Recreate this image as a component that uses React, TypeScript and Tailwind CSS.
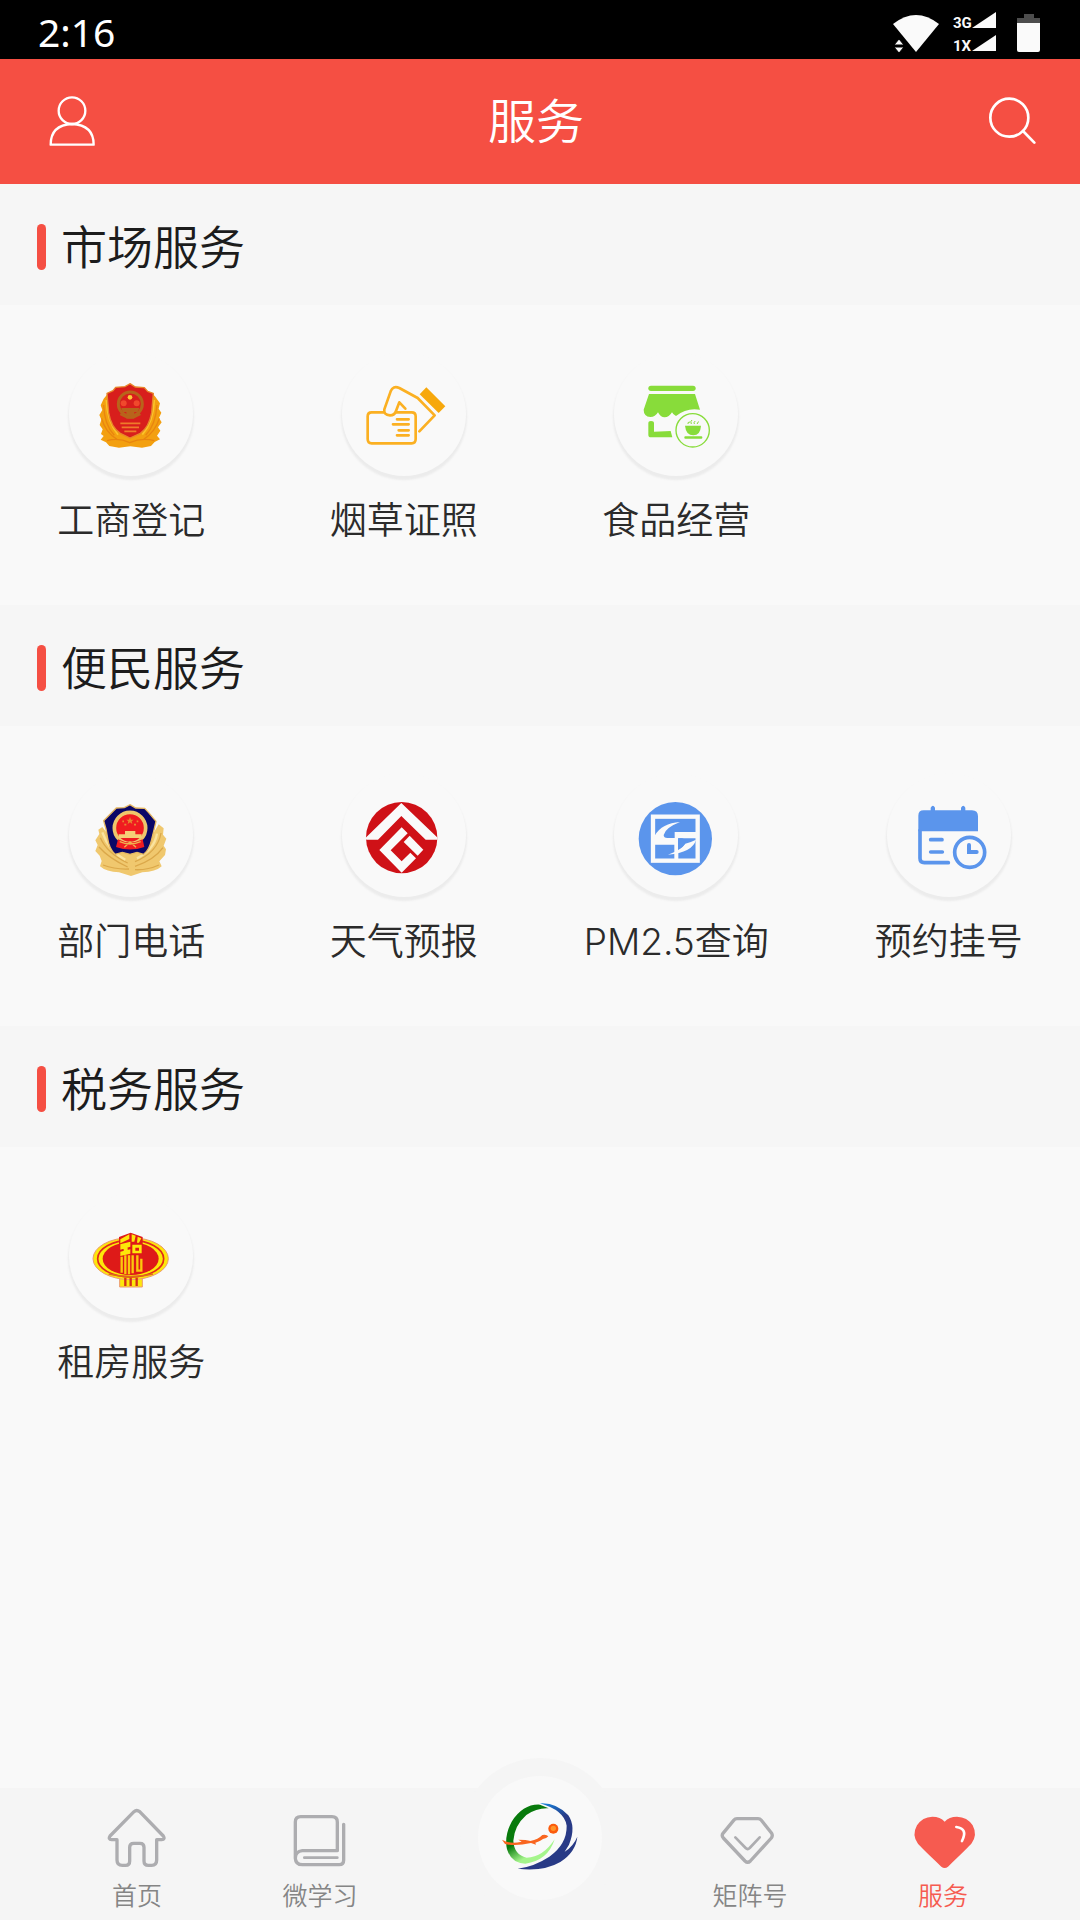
import type { ReactNode } from 'react';

interface Service {
  name: string;
  icon: ReactNode;
}

interface ServiceGroup {
  title: string;
  services: Service[];
}

function BusinessIcon() {
  return (
    <svg viewBox="86 6 372 372" className="size-[124px]" aria-hidden="true">
      <path
        d="M205 128 L190 146 L181 166 L186 180 L177 195 L183 209 L178 225 L187 238 L182 252 L190 258 L181 269 L197 277 L207 288 L236 293 L270 289 L305 293 L332 288 L343 276 L359 268 L350 257 L360 242 L353 232 L364 217 L356 204 L363 188 L355 176 L359 160 L345 140 L332 126 Z"
        fill="#f3a010"
      />
      <path d="M190 165 Q192 225 222 256 M184 205 Q194 245 230 268 M350 165 Q346 225 316 256 M357 205 Q345 245 310 268 M200 272 Q235 262 268 278 Q305 262 342 272" stroke="#e9850f" strokeWidth="4" fill="none" />
      <path d="M198 150 Q200 215 233 254 M342 150 Q340 215 306 254" stroke="#fbc52a" strokeWidth="5" fill="none" />
      <path
        d="M269 101 L285 111 L312 113 L322 124 L339 130 L334 188 Q326 232 300 250 L269 264 L240 250 Q212 232 205 188 L200 130 L218 122 L226 112 L254 110 Z"
        fill="#d81e1c"
        stroke="#e8862a"
        strokeWidth="4"
      />
      <circle cx="270" cy="162" r="36" fill="none" stroke="#b8641b" strokeWidth="9" />
      <circle cx="269" cy="142" r="7" fill="#ffc83c" />
      <circle cx="250" cy="160" r="9" fill="#f0492c" />
      <circle cx="289" cy="160" r="9" fill="#f0492c" />
      <path d="M243 174 H297 L292 186 H247 Z M258 184 H282 V206 H258 Z" fill="#b8641b" />
      <path d="M240 192 Q270 212 300 192" stroke="#b8641b" strokeWidth="7" fill="none" />
      <path d="M240 220 H300 M244 232 H296 M252 244 H288" stroke="#ef7b2a" strokeWidth="5" />
    </svg>
  );
}

function LicenceIcon() {
  return (
    <svg viewBox="94 6 372 372" className="size-[124px]" fill="none" stroke="#fbb022" strokeWidth="8" strokeLinecap="round" strokeLinejoin="round" aria-hidden="true">
      <path d="M220 187 H183 Q171 187 171 199 V267 Q171 280 183 280 H303 Q315 280 315 267 V199 Q315 187 303 187 H256" />
      <path d="M326 244 L372 196 L321 144 L266 114 Q247 106 240 124 L221 178 Q218 195 238 196 Q252 196 256 183 L266 157 L284 176" />
      <path d="M259 208 H294 M247 223 H294 M264 241 H294 M259 256 H294" />
      <path d="M347 112 L404 169 L384 189 L327 133 Z" fill="#f7a80c" stroke="none" />
    </svg>
  );
}

function FoodIcon() {
  return (
    <svg viewBox="102 6 372 372" className="size-[124px]" fill="#88dc3a" aria-hidden="true">
      <rect x="205" y="107" width="142" height="16" rx="8" />
      <path d="M207 132 H345 L360 179 Q320 172 288 198 Q279 194 276 187 Q267 202 254 202 Q241 202 234 187 Q226 201 211 201 Q191 199 191 179 Z" />
      <path d="M205 220 Q205 213 213 213 Q222 213 222 220 V245 L272 243 L277 262 H213 Q205 262 205 254 Z" />
      <circle cx="338" cy="241" r="50" fill="none" stroke="#88dc3a" strokeWidth="4" />
      <path d="M315 227 H363 Q361 256 340 256 Q318 256 315 227 Z" />
      <rect x="313" y="259" width="54" height="7" rx="3" />
      <path d="M324 222 Q322 216 330 216 M334 222 Q330 214 336 210 M343 222 Q340 216 346 213 M352 222 Q350 218 357 215" fill="none" stroke="#88dc3a" strokeWidth="3" />
    </svg>
  );
}

function PoliceIcon() {
  return (
    <svg viewBox="86 6 372 372" className="size-[124px]" aria-hidden="true">
      <path
        d="M186 168 L174 176 L177 189 L165 208 L172 222 L165 240 L178 254 L184 270 L179 286 Q198 303 236 304 L272 315 L306 304 Q346 303 364 286 L357 271 L374 252 L377 235 L370 224 L378 203 L368 191 L370 172 L355 160 L320 220 H225 Z"
        fill="#f0c86e"
      />
      <path d="M180 200 Q200 246 262 276 M176 228 Q206 262 262 288 M188 282 Q225 296 266 294 M362 186 Q352 244 284 272 M368 230 Q340 268 284 286 M356 282 Q320 298 284 296" stroke="#dba84a" strokeWidth="4" fill="none" />
      <path d="M186 184 Q205 240 255 266 M350 188 Q342 236 290 262" stroke="#fae3a0" strokeWidth="7" fill="none" />
      <path
        d="M269 101 L286 111 L313 112 L325 125 L347 151 Q341 178 334 205 Q327 237 310 250 L290 244 L269 250 L246 244 L224 250 Q206 232 202 202 Q198 172 190 149 L216 123 L228 111 L252 110 Z"
        fill="#0b0767"
        stroke="#e6b862"
        strokeWidth="4"
      />
      <circle cx="269" cy="171" r="47" fill="#f01b20" stroke="#efc66c" strokeWidth="11" />
      <path d="M269 138 l3 8 h8 l-6 5 l2 8 l-7 -5 l-7 5 l2 -8 l-6 -5 h8 Z" fill="#e88730" />
      <path d="M252 161 h6 M281 161 h6 M246 151 h5 M289 151 h5" stroke="#e88730" strokeWidth="5" />
      <path d="M254 180 H285 V190 H304 V201 H235 V190 H254 Z" fill="#f5cf77" />
      <path d="M233 205 Q269 224 307 205 L312 228 Q269 243 227 228 Z" fill="#f01b20" />
      <path d="M238 212 Q269 226 301 212 M252 229 L269 213 L287 229" stroke="#efb34f" strokeWidth="4" fill="none" />
    </svg>
  );
}

function WeatherIcon() {
  return (
    <svg viewBox="94 6 372 372" className="size-[124px]" aria-hidden="true">
      <circle cx="273" cy="200" r="107" fill="#cf1117" />
      <g fill="#fafafa">
        <path d="M272 96 L381 200 L379 206 H345 L272 135 L202 206 H167 L165 200 Z" />
        <path d="M273 169 L291 187 L240 238 L273 271 L299 245 L316 262 L273 305 L206 237 Z" />
        <path d="M297 194 L338 236 L321 254 L279 213 Z" />
      </g>
    </svg>
  );
}

function AirIcon() {
  return (
    <svg viewBox="132 6 372 372" className="size-[124px]" aria-hidden="true">
      <circle cx="316" cy="203" r="110" fill="#5b95ec" />
      <rect x="249" y="137" width="134" height="132" fill="#5b95ec" stroke="#fafafa" strokeWidth="13" />
      {/* two strokes mirrored around the centre of the square */}
      <g fill="#fafafa">
        <path d="M254 194 Q276 156 330 153 Q286 170 281 192 Q281 201 292 201 H314 V183 H380 V202 H325 V268 H313 V221 H254 Z" />
        <path d="M378 206 Q368 244 294 251 Q334 236 346 218 Q362 214 378 206 Z" />
      </g>
      <path d="M324 202 H336 Q346 204 346 213 Q344 226 324 236 Z" fill="#5b95ec" />
    </svg>
  );
}

function AppointmentIcon() {
  return (
    <svg viewBox="948 6 372 372" className="size-[124px]" fill="none" stroke="#5b95ec" strokeWidth="11" strokeLinecap="round" aria-hidden="true">
      <path d="M1042 181 V134 Q1042 118 1058 118 H1079 V110 Q1086 98 1092 110 V118 H1170 V110 Q1177 98 1183 110 V118 H1203 Q1221 118 1221 136 V181 Z" fill="#5b95ec" stroke="none" />
      <path d="M1047 178 V262 Q1047 275 1060 275 H1132" />
      <path d="M1079 206 H1113 M1079 243 H1114" />
      <circle cx="1196" cy="244" r="45" />
      <path d="M1194 222 V243 H1217" strokeWidth="12" />
    </svg>
  );
}

function TaxIcon() {
  return (
    <svg viewBox="86 6 372 372" className="size-[124px]" aria-hidden="true">
      <path d="M238 248 H306 V285 H238 Z" fill="#fde70a" stroke="#eb9a72" strokeWidth="3" />
      <ellipse cx="271" cy="200" rx="113" ry="63" fill="#fde70a" stroke="#eb9a72" strokeWidth="3" />
      <ellipse cx="271" cy="200" rx="99" ry="55" fill="none" stroke="#e02a1c" strokeWidth="5" />
      <ellipse cx="271" cy="200" rx="84" ry="49" fill="#de1a18" />
      <path d="M236 135 L271 122 L307 135 V242 Q271 252 236 242 Z" fill="#de1a18" />
      <path d="M240 142 L267 127 V141 L240 154 Z M274 127 L286 131 L282 149 H274 Z M292 134 L303 139 L296 152 H290 Z M240 157 L270 149 V164 L240 173 Z M250 166 H262 V184 H250 Z M240 179 L270 172 V185 L240 192 Z" fill="#fde70a" />
      <path d="M276 158 H304 V184 H276 Z M285 167 V176 H296 V167 Z" fill="#fde70a" fillRule="evenodd" />
      <path d="M244 194 V242 M255 190 V246 M266 190 V247 M277 190 V244 M291 190 V236 H303 V200" stroke="#fbc80c" strokeWidth="7" fill="none" />
      <path d="M205 246 Q271 261 338 246" stroke="#e0661c" strokeWidth="4" fill="none" />
      <path d="M255 257 V282 M271 257 V282 M289 257 V282" stroke="#d3311a" strokeWidth="7" />
    </svg>
  );
}

const groups: ServiceGroup[] = [
  {
    title: '市场服务',
    services: [
      { name: '工商登记', icon: <BusinessIcon /> },
      { name: '烟草证照', icon: <LicenceIcon /> },
      { name: '食品经营', icon: <FoodIcon /> },
    ],
  },
  {
    title: '便民服务',
    services: [
      { name: '部门电话', icon: <PoliceIcon /> },
      { name: '天气预报', icon: <WeatherIcon /> },
      { name: 'PM2.5查询', icon: <AirIcon /> },
      { name: '预约挂号', icon: <AppointmentIcon /> },
    ],
  },
  {
    title: '税务服务',
    services: [{ name: '租房服务', icon: <TaxIcon /> }],
  },
];

function StatusBar() {
  return (
    <div className="flex h-[59px] items-center justify-between bg-black px-10 pl-[38px] text-white">
      <span className="pt-1 font-['Noto_Sans'] text-[39px] leading-none font-normal">2:16</span>
      <svg viewBox="0 0 147 44" className="mt-1 h-11 w-[147px]" fill="#fafafa" aria-hidden="true">
        <path d="M0 14 Q23 -4 46 14 L23 42 Z" />
        <path d="M6 29 L11 35 H1 Z M1 37 H11 L6 43 Z" stroke="#000" strokeWidth="1" />
        <text x="60" y="18" fontSize="15" fontWeight="700" fontFamily="Roboto, sans-serif">3G</text>
        <text x="60" y="41" fontSize="15" fontWeight="700" fontFamily="Roboto, sans-serif">1X</text>
        <path d="M79 18 L103 2 V18 Z M79 41 L103 25 V41 Z" />
        <path d="M131 4 H141 V8 H147 V13 H124 V8 H131 Z" fill="#4d4d4d" />
        <path d="M124 13 H147 V40 Q147 42 145 42 H126 Q124 42 124 40 Z" />
      </svg>
    </div>
  );
}

function Header() {
  return (
    <header className="flex h-[125px] items-center bg-[#f54f43] pb-0.5 pl-12 pr-11 text-white">
      <button type="button" aria-label="个人中心" className="w-12">
        <svg viewBox="144 287 144 150" className="h-[50px] w-12" fill="none" stroke="currentColor" strokeWidth="7" strokeLinejoin="round">
          <circle cx="216" cy="331" r="40" />
          <path d="M152 433 Q152 374 216 371 Q281 374 281 433 Z" />
        </svg>
      </button>
      <h1 className="flex-1 pt-0.5 text-center text-[48px] leading-[60px]">服务</h1>
      <button type="button" aria-label="搜索" className="flex w-[60px] justify-end">
        <svg viewBox="684 291 144 144" className="size-12" fill="none" stroke="currentColor" strokeWidth="8" strokeLinecap="round">
          <circle cx="748" cy="353" r="57" />
          <path d="M789 393 L823 428" />
        </svg>
      </button>
    </header>
  );
}

function ServiceSection({ title, services }: ServiceGroup) {
  return (
    <section>
      <div className="flex h-[121px] items-center gap-[15px] bg-[#f6f6f6] pl-[37px] pt-1">
        <span className="h-[46px] w-[9px] rounded-full bg-[#f54f43]" />
        <h2 className="text-[46px] leading-[60px] text-[#1c1c1c]">{title}</h2>
      </div>
      <ul className="grid min-h-[300px] grid-cols-4 content-start gap-x-[72px] px-[31px] pt-[47px]">
        {services.map((service) => (
          <li key={service.name}>
            <a href="#" className="flex flex-col items-center gap-[21px]">
              <span className="rounded-full bg-[#f9f9f9] shadow-[0_3px_2px_1px_#ececec]">{service.icon}</span>
              <span className="whitespace-nowrap text-[37px] leading-[48px] text-[#2b2b2b]">{service.name}</span>
            </a>
          </li>
        ))}
      </ul>
    </section>
  );
}

function HomeIcon() {
  return (
    <svg viewBox="141 174 180 180" className="size-[60px]" fill="none" stroke="#adadb0" strokeWidth="10" strokeLinejoin="round" aria-hidden="true">
      <path d="M222 185 Q230 178 239 185 L310 258 Q316 268 305 269 H290 V330 Q290 346 275 346 H265 Q252 346 252 333 V292 Q252 280 240 280 H221 Q209 280 209 292 V333 Q209 346 197 346 H187 Q171 346 171 330 V269 H155 Q144 268 150 258 Z" />
    </svg>
  );
}

function BookIcon() {
  return (
    <svg viewBox="690 174 180 180" className="size-[60px]" fill="none" stroke="#adadb0" strokeWidth="10" strokeLinecap="round" strokeLinejoin="round" aria-hidden="true">
      <path d="M706 325 V216 Q706 200 722 200 H816 Q832 200 832 216 V302 H727 Q706 304 706 325 Q707 344 727 344 H838 Q851 344 851 330 V223" />
      <path d="M733 323 H832" strokeWidth="8" />
    </svg>
  );
}

function DiamondIcon() {
  return (
    <svg viewBox="180 174 180 180" className="size-[60px]" fill="none" stroke="#adadb0" strokeWidth="10" strokeLinecap="round" strokeLinejoin="round" aria-hidden="true">
      <path d="M231 206 H294 Q300 206 304 211 L335 250 Q339 257 334 264 L271 333 Q263 341 255 333 L190 264 Q184 257 189 250 L221 211 Q225 206 231 206 Z" />
      <path d="M226 262 L257 294 Q263 300 269 294 L299 262" strokeWidth="8" />
    </svg>
  );
}

function HeartIcon() {
  return (
    <svg viewBox="759 174 180 180" className="size-[60px] overflow-visible" aria-hidden="true">
      <path d="M854 215 Q841 200 817 200 Q787 201 771 226 Q755 255 773 280 Q781 291 844 350 Q854 358 864 350 Q926 291 935 280 Q953 255 938 226 Q922 201 891 200 Q867 200 854 215 Z" fill="#f65b50" />
      <path d="M889 231 Q925 236 906 273" fill="none" stroke="#fff" strokeWidth="8" strokeLinecap="round" />
    </svg>
  );
}

function LogoIcon() {
  return (
    <svg viewBox="54 108 372 372" className="size-[124px]" aria-hidden="true">
      <defs>
        <linearGradient id="leaf" x1="0" y1="0" x2="0.5" y2="1">
          <stop offset="0.6" stopColor="#087a0c" />
          <stop offset="0.88" stopColor="#a5f58c" />
        </linearGradient>
        <linearGradient id="wave" x1="0" y1="0" x2="0.3" y2="1">
          <stop offset="0.1" stopColor="#1684df" />
          <stop offset="0.4" stopColor="#283a86" />
        </linearGradient>
      </defs>
      <path d="M266 205 L240 194 Q190 191 155 245 Q132 288 141 328 Q154 370 196 371 Q264 362 284 298 Q249 352 200 353 Q162 344 160 302 Q163 257 199 225 Q231 203 266 205 Z" fill="url(#leaf)" />
      <path d="M240 190 Q289 187 325 226 Q349 261 327 314 L314 335 Q340 319 352 290 Q348 335 301 366 Q252 395 173 386 Q222 380 268 350 Q321 312 320 257 Q313 211 240 190 Z" fill="url(#wave)" />
      <path d="M126 299 Q149 313 185 305 L175 299 Q199 299 211 303 Q235 298 247 285 Q259 282 265 289 Q258 297 249 297 Q234 307 226 308 L228 314 L213 309 Q166 320 135 312 Z" fill="#f9651f" />
      <circle cx="280" cy="266" r="15" fill="#fb5b0d" />
      <circle cx="280" cy="265" r="8" fill="#ff9428" />
    </svg>
  );
}

function NavItem({ label, icon, active = false }: { label: string; icon: ReactNode; active?: boolean }) {
  return (
    <a
      href="#"
      aria-current={active ? 'page' : undefined}
      className={`flex flex-col items-center gap-3 pt-5 text-[25px] leading-[32px] ${active ? 'text-[#f65b50]' : 'text-[#858585]'}`}
    >
      {icon}
      <span>{label}</span>
    </a>
  );
}

function BottomNav() {
  return (
    <nav className="sticky bottom-0 mt-auto grid h-[132px] grid-cols-[182fr_184fr_256fr_164fr_222fr] bg-[#f5f5f5] pl-[46px] pr-[26px]">
      <NavItem label="首页" icon={<HomeIcon />} />
      <NavItem label="微学习" icon={<BookIcon />} />
      {/* raised centre button */}
      <a href="#" aria-label="主页" className="-mt-[30px] flex size-40 items-center justify-center justify-self-center rounded-full bg-[#f5f5f5]">
        <span className="rounded-full bg-[#f9f9f9]">
          <LogoIcon />
        </span>
      </a>
      <NavItem label="矩阵号" icon={<DiamondIcon />} />
      <NavItem label="服务" icon={<HeartIcon />} active />
    </nav>
  );
}

export default function App() {
  return (
    <div className="flex min-h-screen flex-col overflow-x-clip bg-[#f9f9f9] font-['Inter','Noto_Sans_CJK_SC',sans-serif] font-[350]">
      <StatusBar />
      <Header />
      <main>
        {groups.map((group) => (
          <ServiceSection key={group.title} {...group} />
        ))}
      </main>
      <BottomNav />
    </div>
  );
}
